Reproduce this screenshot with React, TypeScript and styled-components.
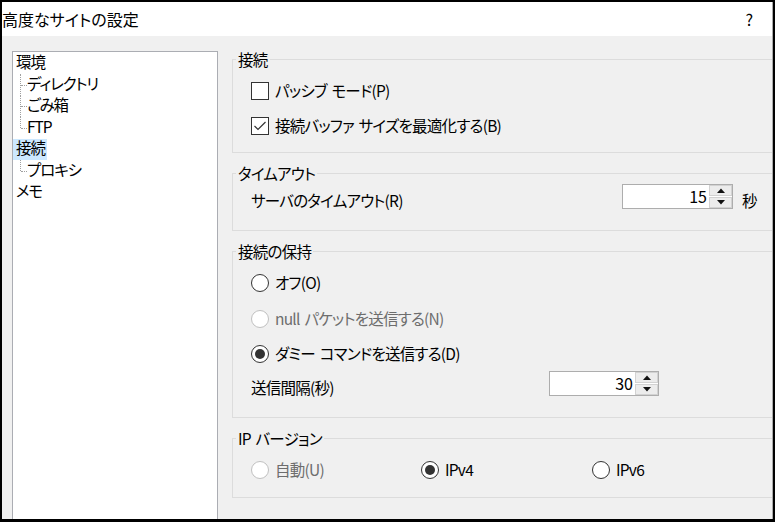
import React from "react";
import styled, { createGlobalStyle } from "styled-components";

const FONT = `"Noto Sans CJK JP", "Noto Sans", sans-serif`;

const Global = createGlobalStyle`
  html, body { margin: 0; padding: 0; background: #fff; }
  body {
    font-family: ${FONT};
    font-size: 15.5px;
    color: #000;
    font-feature-settings: "palt";
    letter-spacing: -0.75px;
    word-spacing: 2px;
  }
  * { box-sizing: border-box; }
`;

const Window = styled.div`
  width: 775px;
  height: 522px;
  border-style: solid;
  border-color: #000;
  border-width: 2px 2px 3px 2px;
  overflow: hidden;
`;

const Frame = styled.div`
  height: 100%;
  display: flex;
  flex-direction: column;
  border-right: 1px solid #a9a9a9;
`;

const TitleBar = styled.div`
  height: 34px;
  flex: none;
  background: #fff;
  display: flex;
  align-items: center;
  justify-content: space-between;
  padding: 0 19px 0 0;
  font-size: 16px;
  letter-spacing: 0;
  line-height: 1;
`;

const Body = styled.div`
  flex: 1;
  min-height: 0;
  display: flex;
  gap: 14px;
  padding: 15px 0 0 10px;
  background: #f0f0f0;
`;

const TreePanel = styled.div`
  width: 206px;
  flex: none;
  background: #fff;
  border: 1px solid #abadb3;
  margin-bottom: -6px;
  padding-top: 0.5px;
`;

const TreeRow = styled.div<{ $level: number; $last?: boolean }>`
  position: relative;
  height: 21.5px;
  display: flex;
  align-items: stretch;
  padding-left: ${(p) => (p.$level ? 11 : 0)}px;

  ${(p) =>
    p.$level
      ? `
    &::before {
      content: "";
      position: absolute;
      left: 7px;
      top: 0;
      height: ${p.$last ? "50%" : "100%"};
      border-left: 1px dotted #a0a0a0;
    }
    &::after {
      content: "";
      position: absolute;
      left: 8px;
      top: 50%;
      width: 6px;
      border-top: 1px dotted #a0a0a0;
    }
  `
      : ""}
`;

const TreeLabel = styled.span<{ $selected?: boolean }>`
  display: flex;
  align-items: center;
  padding: 0 2px 3px 3px;
  line-height: 1;
  font-size: 15.5px;
  letter-spacing: -1.1px;
  background: ${(p) => (p.$selected ? "#cce8ff" : "transparent")};
`;

const Settings = styled.div`
  flex: 1;
  min-width: 0;
  display: flex;
  flex-direction: column;
  gap: 12px;
`;

const Group = styled.fieldset`
  margin: 0;
  padding: 0;
  min-width: 0;
  border: 1px solid #dcdcdc;
  border-right: none;
`;

const Legend = styled.legend`
  margin-left: 3px;
  padding: 0 2px;
  font-size: 15.5px;
  line-height: 16px;
  height: 16px;
`;

const GroupBody = styled.div<{ $pad: string }>`
  padding: ${(p) => p.$pad};
`;

const OptionRow = styled.div<{ $h: number }>`
  height: ${(p) => p.$h}px;
  display: flex;
  align-items: center;
  gap: 6px;
  line-height: 1;
`;

const OptionText = styled.span<{ $disabled?: boolean }>`
  color: ${(p) => (p.$disabled ? "#6d6d6d" : "#000")};
  white-space: nowrap;
`;

const Box = styled.span`
  width: 18px;
  height: 18px;
  flex: none;
  border: 1px solid #333;
  background: #fff;
  display: flex;
  align-items: center;
  justify-content: center;
`;

const Circle = styled.span<{ $disabled?: boolean }>`
  width: 18px;
  height: 18px;
  flex: none;
  border-radius: 50%;
  border: 1px solid ${(p) => (p.$disabled ? "#c0c0c0" : "#333")};
  background: #fff;
  display: flex;
  align-items: center;
  justify-content: center;
`;

const Dot = styled.span`
  width: 10px;
  height: 10px;
  border-radius: 50%;
  background: #333;
`;

const FieldRow = styled.div`
  height: 25px;
  display: flex;
  align-items: flex-start;
  line-height: 16px;
`;

const FieldLabel = styled.span<{ $width?: number }>`
  margin-top: 8px;
  white-space: nowrap;
  ${(p) => (p.$width ? `width: ${p.$width}px; flex: none;` : "flex: 1;")}
`;

const Unit = styled.span`
  margin-top: 8px;
  margin-left: 9px;
  width: 16px;
`;

const Spin = styled.div<{ $w: number }>`
  width: ${(p) => p.$w}px;
  height: 25px;
  flex: none;
  border: 1px solid #adadad;
  background: #fff;
  display: flex;
`;

const SpinValue = styled.span`
  flex: 1;
  text-align: right;
  padding-right: 2px;
  font-size: 16px;
  letter-spacing: 0;
  line-height: 23px;
`;

const SpinButtons = styled.div`
  width: 23px;
  display: flex;
  flex-direction: column;
  gap: 1px;
`;

const SpinButton = styled.span`
  flex: 1;
  background: #ececec;
  border: 1px solid #d2d2d2;
  display: flex;
  align-items: center;
  justify-content: center;
`;

const IpRow = styled.div`
  height: 30px;
  display: grid;
  grid-template-columns: 170px 171px 1fr;
  align-items: center;
`;

const IpOption = styled.div`
  display: flex;
  align-items: center;
  gap: 6px;
  line-height: 1;
`;

function Checkbox({ checked, label }: { checked?: boolean; label: string }) {
  return (
    <OptionRow $h={35}>
      <Box>
        {checked && (
          <svg width="14" height="12" viewBox="0 0 14 12">
            <polyline points="1.5,6 5,9.5 12.5,2" fill="none" stroke="#333" strokeWidth="1.2" />
          </svg>
        )}
      </Box>
      <OptionText>{label}</OptionText>
    </OptionRow>
  );
}

function RadioMark({ checked, disabled }: { checked?: boolean; disabled?: boolean }) {
  return <Circle $disabled={disabled}>{checked && <Dot />}</Circle>;
}

function Radio({
  label,
  checked,
  disabled,
  h,
}: {
  label: string;
  checked?: boolean;
  disabled?: boolean;
  h: number;
}) {
  return (
    <OptionRow $h={h}>
      <RadioMark checked={checked} disabled={disabled} />
      <OptionText $disabled={disabled}>{label}</OptionText>
    </OptionRow>
  );
}

function SpinBox({ value, w }: { value: string; w: number }) {
  return (
    <Spin $w={w}>
      <SpinValue>{value}</SpinValue>
      <SpinButtons>
        <SpinButton>
          <svg width="8" height="5" viewBox="0 0 8 5">
            <polygon points="0,5 8,5 4,0.5" fill="#111" />
          </svg>
        </SpinButton>
        <SpinButton>
          <svg width="8" height="5" viewBox="0 0 8 5">
            <polygon points="0,0 8,0 4,4.5" fill="#111" />
          </svg>
        </SpinButton>
      </SpinButtons>
    </Spin>
  );
}

const tree = [
  { label: "環境", level: 0 },
  { label: "ディレクトリ", level: 1 },
  { label: "ごみ箱", level: 1 },
  { label: "FTP", level: 1, last: true },
  { label: "接続", level: 0, selected: true },
  { label: "プロキシ", level: 1, last: true },
  { label: "メモ", level: 0 },
];

export default function App() {
  return (
    <>
      <Global />
      <Window>
        <Frame>
          <TitleBar>
            <span>高度なサイトの設定</span>
            <span>?</span>
          </TitleBar>
          <Body>
            <TreePanel>
              {tree.map((t) => (
                <TreeRow key={t.label} $level={t.level} $last={t.last}>
                  <TreeLabel $selected={t.selected}>{t.label}</TreeLabel>
                </TreeRow>
              ))}
            </TreePanel>
            <Settings>
              <Group>
                <Legend>接続</Legend>
                <GroupBody $pad="6px 0 9px 18px">
                  <Checkbox label="パッシブ モード(P)" />
                  <Checkbox checked label="接続バッファ サイズを最適化する(B)" />
                </GroupBody>
              </Group>
              <Group>
                <Legend>タイムアウト</Legend>
                <GroupBody $pad="3px 14px 21px 18px">
                  <FieldRow>
                    <FieldLabel>サーバのタイムアウト(R)</FieldLabel>
                    <SpinBox value="15" w={111} />
                    <Unit>秒</Unit>
                  </FieldRow>
                </GroupBody>
              </Group>
              <Group>
                <Legend>接続の保持</Legend>
                <GroupBody $pad="6px 0 21px 18px">
                  <Radio h={36} label="オフ(O)" />
                  <Radio h={36} disabled label="null パケットを送信する(N)" />
                  <Radio h={34} checked label="ダミー コマンドを送信する(D)" />
                  <FieldRow>
                    <FieldLabel $width={298}>送信間隔(秒)</FieldLabel>
                    <SpinBox value="30" w={110} />
                  </FieldRow>
                </GroupBody>
              </Group>
              <Group>
                <Legend>IP バージョン</Legend>
                <GroupBody $pad="9px 0 12px 18px">
                  <IpRow>
                    <IpOption>
                      <RadioMark disabled />
                      <OptionText $disabled>自動(U)</OptionText>
                    </IpOption>
                    <IpOption>
                      <RadioMark checked />
                      <OptionText>IPv4</OptionText>
                    </IpOption>
                    <IpOption>
                      <RadioMark />
                      <OptionText>IPv6</OptionText>
                    </IpOption>
                  </IpRow>
                </GroupBody>
              </Group>
            </Settings>
          </Body>
        </Frame>
      </Window>
    </>
  );
}
